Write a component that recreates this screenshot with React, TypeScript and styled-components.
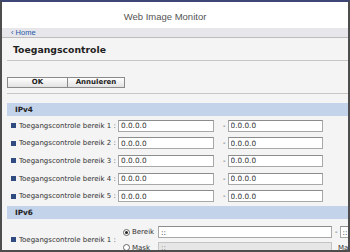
import React from 'react'
import styled, { createGlobalStyle } from 'styled-components'

const GlobalStyle = createGlobalStyle`
  html, body {
    margin: 0;
    padding: 0;
    background: #fff;
  }
  * {
    box-sizing: border-box;
  }
`

const Frame = styled.div`
  width: 350px;
  height: 252px;
  border-top: 2px solid #3d4674;
  border-left: 2px solid #4d4d4d;
  border-right: 2px solid #4d4d4d;
  border-bottom: 2px solid #4d4d4d;
  background: #f4f4f4;
  overflow: hidden;
  display: flex;
  flex-direction: column;
`

const Header = styled.header`
  flex: none;
  height: 26px;
  background: #fff;
  display: flex;
  align-items: center;
  justify-content: center;
  padding: 2px 20px 0 0;
  font: 9.5px "Liberation Sans", Arial, sans-serif;
  color: #555;
`

const Crumbs = styled.nav`
  flex: none;
  height: 10px;
  background: #e6e6eb;
  border-bottom: 1px solid #bdbdbd;
  display: flex;
  align-items: center;
  padding-left: 9px;
  font: 7.5px "Liberation Sans", Arial, sans-serif;
`

const HomeLink = styled.a`
  color: #2458a8;
  text-decoration: none;
`

const Content = styled.main`
  flex: 1;
  padding-left: 5px;
  font-family: "DejaVu Sans", Verdana, sans-serif;
  color: #333;
  white-space: nowrap;
`

const TitleBar = styled.div`
  height: 23px;
  border-bottom: 1px solid #c6c6c6;
  display: flex;
  align-items: center;
  padding: 1px 0 0 6px;
`

const Title = styled.h1`
  margin: 0;
  font-size: 9.3px;
  font-weight: bold;
  color: #222;
`

const ButtonBar = styled.div`
  display: flex;
  padding: 16px 0 5px;
  border-bottom: 1px solid #c6c6c6;
`

const Button = styled.button<{ $width: number }>`
  width: ${(p) => p.$width}px;
  height: 11px;
  padding: 0;
  margin: 0 -1px 0 0;
  border: 1px solid #8a8a8a;
  background: linear-gradient(#ffffff, #e2e2e2);
  font: bold 7px "DejaVu Sans", Verdana, sans-serif;
  color: #222;
  line-height: 9px;
`

const Section = styled.div<{ $gap: number }>`
  height: 13px;
  margin-top: ${(p) => p.$gap}px;
  background: #c3d3ea;
  display: flex;
  align-items: center;
  padding-left: 8px;
  font-size: 7.3px;
  font-weight: bold;
  color: #222;
`

const Rows = styled.div`
  padding-top: 1px;
`

const FieldRow = styled.div`
  height: 17.6px;
  display: flex;
  align-items: center;
  padding-left: 4px;
`

const Bullet = styled.span`
  flex: none;
  width: 5px;
  height: 5px;
  background: #2f4b7f;
  margin-right: 3px;
`

const Label = styled.span`
  flex: none;
  width: 99px;
  font-size: 7px;
  color: #333;
`

const Box = styled.input<{ $width: number }>`
  flex: none;
  width: ${(p) => p.$width}px;
  height: 12px;
  margin: 0;
  padding: 0 2px;
  border: 1px solid #a8a8a8;
  border-top-color: #8c8c8c;
  background: #fff;
  font: 7.3px "DejaVu Sans", Verdana, sans-serif;
  color: #333;
  outline: none;

  &:disabled {
    background: #e6e6e6;
    border-color: #c4c4c4;
    color: #888;
  }
`

const Dash = styled.span<{ $before: number; $after: number }>`
  flex: none;
  font-size: 7px;
  margin: 0 ${(p) => p.$after}px 0 ${(p) => p.$before}px;
`

const RangeBlock = styled.div`
  display: flex;
  align-items: center;
  padding: 5.5px 0 0 4px;
`

const Choices = styled.div`
  display: flex;
  flex-direction: column;
  margin-left: 5px;
`

const Choice = styled.div`
  height: 15.5px;
  display: flex;
  align-items: center;
`

const Radio = styled.span<{ $checked?: boolean }>`
  flex: none;
  position: relative;
  width: 7px;
  height: 7px;
  border-radius: 50%;
  border: 1px solid #666;
  background: #fff;
  margin-right: 2px;

  &::after {
    content: '';
    display: ${(p) => (p.$checked ? 'block' : 'none')};
    position: absolute;
    left: 1px;
    top: 1px;
    width: 3px;
    height: 3px;
    border-radius: 50%;
    background: #222;
  }
`

const ChoiceText = styled.span<{ $width?: number; $gap?: number }>`
  flex: none;
  width: ${(p) => (p.$width ? `${p.$width}px` : 'auto')};
  margin-left: ${(p) => p.$gap ?? 0}px;
  font-size: 7px;
  color: #333;
`

const ipv4Ranges = [1, 2, 3, 4, 5]

const App = () => {
  return (
    <>
      <GlobalStyle />
      <Frame>
        <Header>Web Image Monitor</Header>
        <Crumbs>
          <HomeLink href="#">‹ Home</HomeLink>
        </Crumbs>
        <Content>
          <TitleBar>
            <Title>Toegangscontrole</Title>
          </TitleBar>
          <ButtonBar>
            <Button $width={61}>OK</Button>
            <Button $width={58}>Annuleren</Button>
          </ButtonBar>

          <Section $gap={9}>IPv4</Section>
          <Rows>
            {ipv4Ranges.map((n) => (
              <FieldRow key={n}>
                <Bullet />
                <Label>Toegangscontrole bereik {n} :</Label>
                <Box $width={96} value="0.0.0.0" readOnly />
                <Dash $before={9} $after={2}>-</Dash>
                <Box $width={95} value="0.0.0.0" readOnly />
              </FieldRow>
            ))}
          </Rows>

          <Section $gap={1}>IPv6</Section>
          <RangeBlock>
            <Bullet />
            <Label>Toegangscontrole bereik 1 :</Label>
            <Choices>
              <Choice>
                <Radio $checked />
                <ChoiceText $width={26}>Bereik</ChoiceText>
                <Box $width={174} value="::" readOnly />
                <Dash $before={3} $after={2}>-</Dash>
                <Box $width={80} value="::" readOnly />
              </Choice>
              <Choice>
                <Radio />
                <ChoiceText $width={26}>Mask</ChoiceText>
                <Box $width={174} value="::" disabled readOnly />
                <ChoiceText $gap={6}>Mask</ChoiceText>
              </Choice>
            </Choices>
          </RangeBlock>
        </Content>
      </Frame>
    </>
  )
}

export default App
